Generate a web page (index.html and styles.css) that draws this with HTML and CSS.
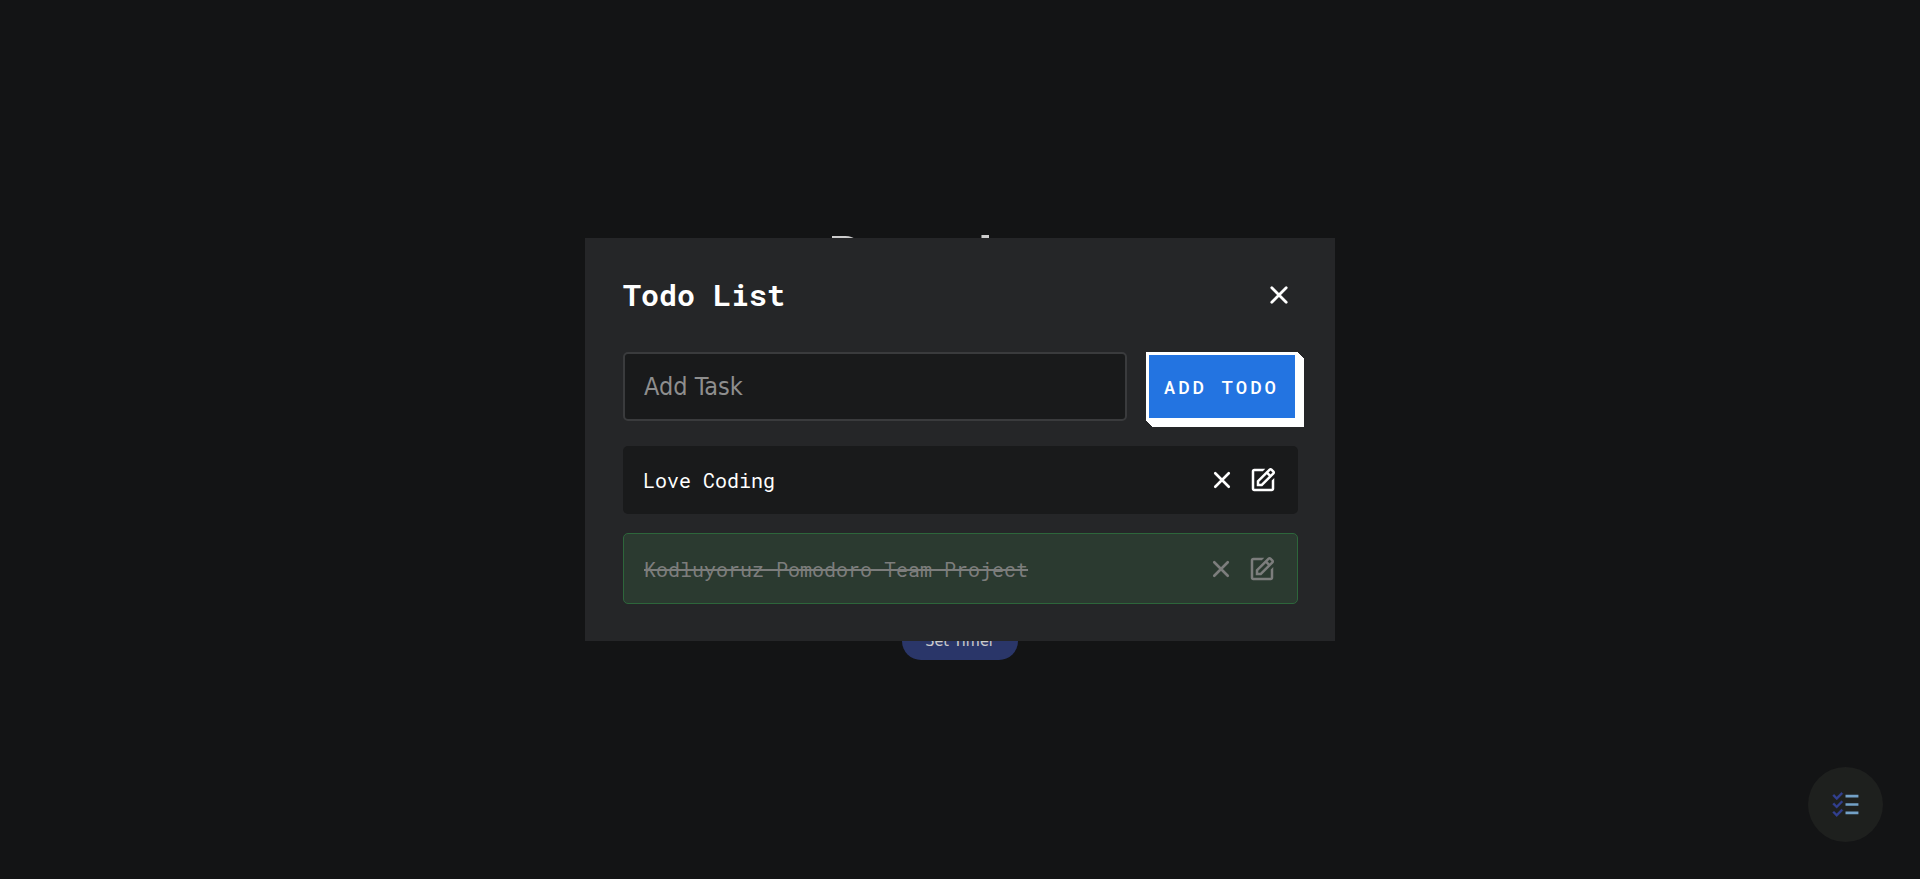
FILE: index.html
```
<!DOCTYPE html>
<html lang="en">
<head>
<meta charset="utf-8">
<title>Pomodoro</title>
<link rel="stylesheet" href="styles.css">
</head>
<body>
<svg class="sprite" aria-hidden="true">
  <symbol id="icon-close" viewBox="0 0 24 24">
    <path d="M6.6 6.6L17.4 17.4M17.4 6.6L6.6 17.4" fill="none" stroke="currentColor" stroke-width="2.1" stroke-linecap="round"/>
  </symbol>
  <symbol id="icon-edit" viewBox="0 0 24 24">
    <path fill="currentColor" d="m7 17.013 4.413-.015 9.632-9.54c.378-.378.586-.88.586-1.414s-.208-1.036-.586-1.414l-1.586-1.586c-.756-.756-2.075-.752-2.825-.003L7 12.583v4.43zM18.045 4.458l1.589 1.583-1.597 1.582-1.586-1.585 1.594-1.58zM9 13.417l6.03-5.973 1.586 1.586-6.029 5.971L9 15.006v-1.589z"/>
    <path fill="currentColor" d="M5 21h14c1.103 0 2-.897 2-2v-8.668l-2 2V19H8.158c-.026 0-.053.01-.079.01-.033 0-.066-.009-.1-.01H5V5h6.847l2-2H5c-1.103 0-2 .897-2 2v14c0 1.103.897 2 2 2z"/>
  </symbol>
</svg>

<main class="page">
  <h1 class="page-title">Pomodoro</h1>
  <button class="set-timer" type="button">Set Timer</button>
</main>

<button class="fab" type="button" aria-label="Open todo list">
  <svg class="fab-icon" viewBox="0 0 48 48" aria-hidden="true">
    <g fill="#3f51b5" stroke="#3f51b5" stroke-width="0.6">
      <path d="M17.8 5.1L10.4 12.4 6.2 8.3 4 10.5 10.4 16.9 20 7.3z"/>
      <path d="M17.8 18.1L10.4 25.4 6.2 21.3 4 23.5 10.4 29.9 20 20.3z"/>
      <path d="M17.8 31.1L10.4 38.4 6.2 34.3 4 36.5 10.4 42.9 20 33.3z"/>
    </g>
    <path fill="#90caf9" d="M24 9h20v4H24zM24 22h20v4H24zM24 35h20v4H24z"/>
  </svg>
</button>

<div class="overlay">
  <section class="modal" role="dialog" aria-labelledby="todo-title">
    <header class="modal-head">
      <h2 class="modal-title" id="todo-title">Todo List</h2>
      <button class="icon-button modal-close" type="button" aria-label="Close"><svg class="icon icon-large"><use href="#icon-close"/></svg></button>
    </header>
    <form class="todo-form">
      <input class="todo-input" type="text" placeholder="Add Task" aria-label="Add Task">
      <button class="todo-add" type="button">ADD TODO</button>
    </form>
    <ul class="todo-list">
      <li class="todo">
        <span class="todo-text">Love Coding</span>
        <button class="icon-button" type="button" aria-label="Delete"><svg class="icon"><use href="#icon-close"/></svg></button>
        <button class="icon-button" type="button" aria-label="Edit"><svg class="icon"><use href="#icon-edit"/></svg></button>
      </li>
      <li class="todo todo-done">
        <span class="todo-text">Kodluyoruz Pomodoro Team Project</span>
        <button class="icon-button" type="button" aria-label="Delete"><svg class="icon"><use href="#icon-close"/></svg></button>
        <button class="icon-button" type="button" aria-label="Edit"><svg class="icon"><use href="#icon-edit"/></svg></button>
      </li>
    </ul>
  </section>
</div>
</body>
</html>
```
FILE: styles.css
```
* {
  box-sizing: border-box;
}

body {
  margin: 0;
  background: #18191b;
  color: #fff;
  font-family: "Roboto Mono", "DejaVu Sans Mono", monospace;
}

button {
  font: inherit;
  color: inherit;
  cursor: pointer;
}

.sprite {
  display: none;
}

.page {
  min-height: 100vh;
  padding-top: 3px;
  display: flex;
  flex-direction: column;
  align-items: center;
  justify-content: center;
  gap: 335px;
}

.page-title {
  margin: 0;
  font-size: 55px;
  line-height: 64px;
}

.set-timer {
  height: 38px;
  padding: 0 23px;
  border: 0;
  border-radius: 19px;
  background: #354484;
  font-family: "DejaVu Sans Condensed", "Noto Sans", sans-serif;
  font-size: 16px;
}

.fab {
  position: fixed;
  right: 37px;
  bottom: 37px;
  width: 75px;
  height: 75px;
  padding: 0;
  display: grid;
  place-items: center;
  border: 0;
  border-radius: 50%;
  background: #262826;
}

.fab-icon {
  width: 31px;
  height: 31px;
}

.overlay {
  position: fixed;
  inset: 0;
  display: grid;
  place-items: center;
  background: rgba(0, 0, 0, 0.2);
}

.modal {
  width: 750px;
  max-width: 100%;
  padding: 38px 37px 37px 38px;
  background: #252628;
}

.modal-head {
  display: flex;
  align-items: center;
  justify-content: space-between;
  margin-bottom: 38px;
}

.modal-title {
  margin: 0;
  font-size: 30px;
  line-height: 38px;
}

.icon-button {
  padding: 0;
  display: flex;
  border: 0;
  background: none;
}

.icon {
  width: 30px;
  height: 30px;
}

.icon-large {
  width: 32px;
  height: 32px;
}

.modal-close {
  padding-right: 3px;
}

.todo-form {
  display: flex;
  gap: 19px;
  margin-bottom: 25px;
}

.todo-input {
  flex: 1;
  min-width: 0;
  height: 69px;
  padding: 0 19px;
  border: 2px solid #3a3b3d;
  border-radius: 5px;
  background: #191a1b;
  color: #fff;
  font-family: "DejaVu Sans Condensed", "Noto Sans", sans-serif;
  font-size: 25px;
}

.todo-input::placeholder {
  color: #8e8e8e;
}

.todo-add {
  padding: 0 16px 0 15px;
  border: 3px solid #fff;
  background: #2374e1;
  box-shadow: 1px 1px #fff, 2px 2px #fff, 3px 3px #fff, 4px 4px #fff, 5px 5px #fff, 6px 6px #fff;
  font-size: 19px;
  font-weight: 500;
  letter-spacing: 3px;
}

.todo-list {
  margin: 0;
  padding: 0;
  display: grid;
  gap: 19px;
  list-style: none;
}

.todo {
  display: flex;
  align-items: center;
  gap: 11px;
  padding: 19px 20px;
  border-radius: 5px;
  background: #191a1b;
  font-size: 20px;
  line-height: 30px;
}

.todo-text {
  flex: 1;
}

.todo-done {
  padding-top: 20px;
  border: 1px solid #2d663b;
  background: #2b3a30;
  color: #7c7d7c;
}

.todo-done .todo-text {
  text-decoration: line-through;
}
```
